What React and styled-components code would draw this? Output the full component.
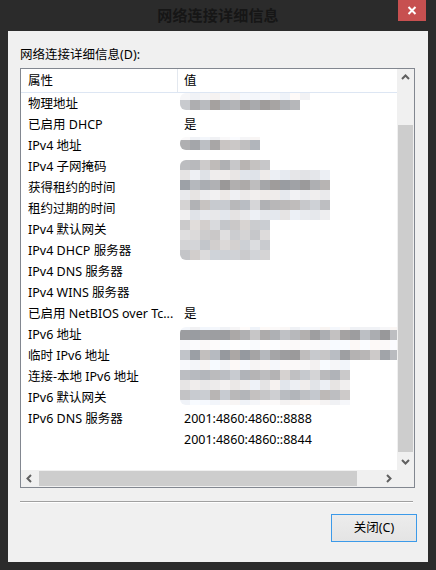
import React from "react";
import styled, { createGlobalStyle } from "styled-components";

const Global = createGlobalStyle`
  html, body { margin: 0; padding: 0; background: #2b2b2b; }
  * { box-sizing: border-box; }
`;

const FONT = `"Noto Sans", "Noto Sans CJK SC", sans-serif`;

const Window = styled.div`
  width: 436px;
  height: 570px;
  background: #2b2b2b;
  display: flex;
  flex-direction: column;
  font-family: ${FONT};
  font-size: 12.5px;
  color: #000;
`;

const TitleBar = styled.div`
  height: 31px;
  flex: none;
  display: grid;
  grid-template-columns: 1fr auto 1fr;
  align-items: start;
`;

const Title = styled.div`
  grid-column: 2;
  font-size: 15px;
  font-weight: 700;
  line-height: 31px;
  color: #161616;
  letter-spacing: 0.2px;
`;

const CloseBtn = styled.div`
  grid-column: 3;
  justify-self: end;
  margin-right: 10px;
  width: 28px;
  height: 21px;
  background: #c75050;
  display: flex;
  align-items: center;
  justify-content: center;
`;

const Client = styled.div`
  flex: 1;
  margin: 0 8px 8px 8px;
  background: #f0f0f0;
  padding: 16px 11px 20px 12px;
  display: flex;
  flex-direction: column;
`;

const Label = styled.div`
  line-height: 16px;
  height: 16px;
  white-space: nowrap;
`;

const ListBox = styled.div`
  margin-top: 5px;
  width: 395px;
  height: 420px;
  border: 1px solid #828790;
  background: #fff;
  display: grid;
  grid-template-columns: 376px 17px;
  grid-template-rows: 401px 17px;
`;

const Content = styled.div`
  position: relative;
  overflow: hidden;
  background: #fff;
`;

const Header = styled.div`
  display: grid;
  grid-template-columns: 157px 1fr;
  height: 24px;
  border-bottom: 1px solid #dde6f3;
`;

const HeadCell = styled.div`
  line-height: 23px;
  padding-left: ${(p) => (p.$first ? 7 : 6)}px;
  border-right: ${(p) => (p.$first ? "1px solid #e3e8ef" : "none")};
  white-space: nowrap;
`;

const Row = styled.div`
  display: grid;
  grid-template-columns: 157px 1fr;
  height: 21px;
  line-height: 21px;
  white-space: nowrap;
`;

const Cell = styled.div`
  padding-left: ${(p) => (p.$first ? 7 : 6)}px;
  overflow: hidden;
`;

const Mosaic = styled.div`
  position: absolute;
  left: 159px;
  display: flex;
  flex-direction: column;
  border-radius: 6px 0 0 6px;
  overflow: hidden;
`;

const MRow = styled.div`
  display: flex;
  height: ${(p) => p.$h}px;
`;

const MCell = styled.div`
  width: 10px;
  height: 100%;
  flex: none;
`;

const VScroll = styled.div`
  background: #f0f0f0;
  display: grid;
  grid-template-rows: 17px 1fr 17px;
`;

const HScroll = styled.div`
  background: #f0f0f0;
  display: grid;
  grid-template-columns: 17px 1fr 17px;
`;

const Corner = styled.div`
  background: #f0f0f0;
`;

const ArrowBtn = styled.div`
  display: flex;
  align-items: center;
  justify-content: center;
`;

const VTrack = styled.div`
  padding: 39px 1px 0 1px;
`;

const VThumb = styled.div`
  height: 327px;
  background: #cdcdcd;
`;

const HTrack = styled.div`
  padding: 1px 0 1px 1px;
`;

const HThumb = styled.div`
  width: 318px;
  height: 100%;
  background: #cdcdcd;
`;

const Separator = styled.div`
  margin-top: 13px;
  width: 393px;
  height: 2px;
  border-top: 1px solid #a0a0a0;
  border-bottom: 1px solid #ffffff;
`;

const Button = styled.button`
  margin-top: 11px;
  align-self: flex-end;
  width: 86px;
  height: 28px;
  border: 1px solid #3c9ae9;
  background: linear-gradient(#ececec, #e4e4e4);
  font-family: ${FONT};
  font-size: 12.5px;
  color: #000;
  padding: 0;
  line-height: 26px;
`;

const Chevron = ({ dir }) => {
  const pts = {
    up: "1,6 4.5,2.5 8,6",
    down: "1,3 4.5,6.5 8,3",
    left: "6,1 2.5,4.5 6,8",
    right: "3,1 6.5,4.5 3,8",
  }[dir];
  return (
    <svg width="9" height="9" viewBox="0 0 9 9">
      <polyline points={pts} fill="none" stroke="#606060" strokeWidth="2" />
    </svg>
  );
};

const rows = [
  ["物理地址", ""],
  ["已启用 DHCP", "是"],
  ["IPv4 地址", ""],
  ["IPv4 子网掩码", ""],
  ["获得租约的时间", ""],
  ["租约过期的时间", ""],
  ["IPv4 默认网关", ""],
  ["IPv4 DHCP 服务器", ""],
  ["IPv4 DNS 服务器", ""],
  ["IPv4 WINS 服务器", ""],
  ["已启用 NetBIOS over Tc...", "是"],
  ["IPv6 地址", ""],
  ["临时 IPv6 地址", ""],
  ["连接-本地 IPv6 地址", ""],
  ["IPv6 默认网关", ""],
  ["IPv6 DNS 服务器", "2001:4860:4860::8888"],
  ["", "2001:4860:4860::8844"],
];

// deterministic pseudo-random
let seed = 7;
const rnd = () => {
  seed = (seed * 9301 + 49297) % 233280;
  return seed / 233280;
};
const tones = {
  dark: [178, 26],
  mid: [196, 20],
  ml: [210, 14],
  light: [234, 8],
  haze: [246, 5],
  white: [251, 3],
};
const color = (tone) => {
  const [b, r] = tones[tone];
  const g = Math.round(b + (rnd() - 0.5) * 2 * r);
  const t = Math.round((rnd() - 0.5) * 8);
  return `rgb(${g + t},${g},${g - t + 2})`;
};

const blocks = [
  { top: 24, rows: [["haze", 7, 13], ["dark", 10, 12]] },
  { top: 68, rows: [["haze", 3, 8], ["dark", 10, 8]] },
  {
    top: 91,
    rows: [
      ["mid", 10, 9],
      ["light", 10, 15],
      ["dark", 10, 15],
      ["light", 10, 15],
      ["mid", 10, 15],
      ["light", 10, 15],
      ["ml", 10, 9],
      ["ml", 10, 9],
      ["ml", 10, 9],
      ["ml", 10, 9],
    ],
  },
  {
    top: 258,
    rows: [
      ["haze", 3, 22],
      ["dark", 10, 22],
      ["white", 10, 22],
      ["dark", 10, 22],
      ["haze", 10, 17],
      ["mid", 10, 17],
      ["light", 10, 17],
      ["mid", 10, 17],
      ["haze", 5, 17],
    ],
  },
].map((b) => ({
  ...b,
  rows: b.rows.map(([tone, h, n]) => ({
    h,
    cells: Array.from({ length: n }, () => color(tone)),
  })),
}));

export default function App() {
  return (
    <>
      <Global />
      <Window>
        <TitleBar>
          <Title>网络连接详细信息</Title>
          <CloseBtn>
            <svg width="10" height="9" viewBox="0 0 10 9">
              <path d="M1.5 1 L8.5 8 M8.5 1 L1.5 8" stroke="#fff" strokeWidth="2" />
            </svg>
          </CloseBtn>
        </TitleBar>
        <Client>
          <Label>网络连接详细信息(D):</Label>
          <ListBox>
            <Content>
              <Header>
                <HeadCell $first>属性</HeadCell>
                <HeadCell>值</HeadCell>
              </Header>
              {rows.map(([k, v], i) => (
                <Row key={i}>
                  <Cell $first>{k}</Cell>
                  <Cell>{v}</Cell>
                </Row>
              ))}
              {blocks.map((b, i) => (
                <Mosaic key={i} style={{ top: b.top }}>
                  {b.rows.map((r, j) => (
                    <MRow key={j} $h={r.h}>
                      {r.cells.map((c, k) => (
                        <MCell key={k} style={{ background: c }} />
                      ))}
                    </MRow>
                  ))}
                </Mosaic>
              ))}
            </Content>
            <VScroll>
              <ArrowBtn><Chevron dir="up" /></ArrowBtn>
              <VTrack><VThumb /></VTrack>
              <ArrowBtn><Chevron dir="down" /></ArrowBtn>
            </VScroll>
            <HScroll>
              <ArrowBtn><Chevron dir="left" /></ArrowBtn>
              <HTrack><HThumb /></HTrack>
              <ArrowBtn><Chevron dir="right" /></ArrowBtn>
            </HScroll>
            <Corner />
          </ListBox>
          <Separator />
          <Button>关闭(C)</Button>
        </Client>
      </Window>
    </>
  );
}
